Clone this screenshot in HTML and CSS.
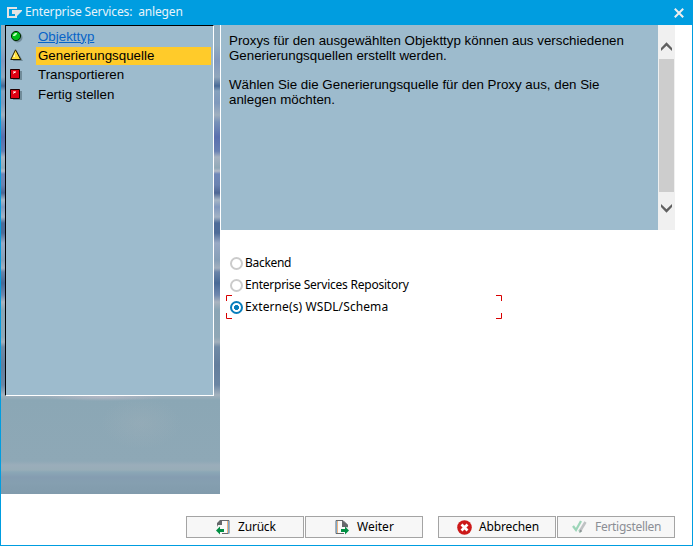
FILE: index.html
```html
<!DOCTYPE html>
<html lang="de">
<head>
<meta charset="utf-8">
<title>Enterprise Services: anlegen</title>
<link rel="stylesheet" href="styles.css">
</head>
<body>
<div class="window">
  <header class="titlebar">
    <svg class="app-icon" width="15" height="12" viewBox="0 0 15 12"><path d="M10 1H1v9h9" fill="none" stroke="#e4e4e4" stroke-width="2"/><path d="M3 2h11v1H6v4H3z" fill="#009de0"/><path d="M5 3h10v1l-5 5H8V7H5z" fill="#e4e4e4"/></svg>
    <h1 class="title">Enterprise Services:&nbsp; anlegen</h1>
    <svg class="close" width="10" height="10" viewBox="0 0 10 10"><path d="M.8.8l8.4 8.4M9.2.8L.8 9.2" stroke="#eee" stroke-width="2"/></svg>
  </header>
  <main class="content">
    <aside class="sidebar">
      <ul class="steps">
        <li class="step"><svg width="14" height="14" viewBox="0 0 14 14"><circle cx="7.500" cy="7.500" r="5" fill="#708b99"/><circle cx="6" cy="6" r="4.600" fill="#00bd18" stroke="#002800"/><path d="M3 5l2-2h2v1L5 6H3z" fill="#b8ffb8"/></svg><a class="label link">Objekttyp</a></li>
        <li class="step active"><svg width="14" height="14" viewBox="0 0 14 14"><path d="M7 2l6 10H3z" fill="#708b99"/><path d="M5.500 .8L.8 10.500h9.900z" fill="#ffe13c" stroke="#241c00"/><path d="M5 4L3 8h2z" fill="#fff6bc"/></svg><span class="label">Generierungsquelle</span></li>
        <li class="step"><svg width="14" height="14" viewBox="0 0 14 14"><path d="M3 3h9v9H3z" fill="#708b99"/><path d="M.5 1.500h9v9h-9z" fill="#e00012" stroke="#200000"/><path d="M3 3h3v2H4v1H3z" fill="#ff8585"/><path d="M4 4h1v1H4z" fill="#fff"/></svg><span class="label">Transportieren</span></li>
        <li class="step"><svg width="14" height="14" viewBox="0 0 14 14"><path d="M3 3h9v9H3z" fill="#708b99"/><path d="M.5 1.500h9v9h-9z" fill="#e00012" stroke="#200000"/><path d="M3 3h3v2H4v1H3z" fill="#ff8585"/><path d="M4 4h1v1H4z" fill="#fff"/></svg><span class="label">Fertig stellen</span></li>
      </ul>
    </aside>
    <section class="pane">
      <div class="info">
        <div class="info-text">
          <p>Proxys für den ausgewählten Objekttyp können aus verschiedenen<br>Generierungsquellen erstellt werden.</p>
          <p>Wählen Sie die Generierungsquelle für den Proxy aus, den Sie<br>anlegen möchten.</p>
        </div>
        <div class="scrollbar">
          <svg width="11" height="9" viewBox="0 0 11 9"><path d="M0 6L5.500 .3 11 6v3L5.500 3.700 0 9z" fill="#606060"/></svg>
          <div class="thumb"></div>
          <svg width="11" height="9" viewBox="0 0 11 9"><path d="M0 3l5.500 5.700L11 3V0L5.500 5.300 0 0z" fill="#606060"/></svg>
        </div>
      </div>
      <div class="options">
        <div class="option"><i class="radio"></i><span class="t-backend">Backend</span></div>
        <div class="option"><i class="radio"></i><span class="t-repo">Enterprise Services Repository</span></div>
        <div class="option"><i class="radio checked"></i><span class="t-wsdl">Externe(s) WSDL/Schema</span>
          <svg class="focus" width="276" height="24" viewBox="0 0 276 24"><path d="M.5 6V.5H6M270 .5h5.500V6M.5 18v5.500H6M270 23.500h5.500V18" fill="none" stroke="#d80000"/></svg>
        </div>
      </div>
    </section>
  </main>
  <footer class="buttons">
    <div class="button back"><svg width="14" height="16" viewBox="0 0 14 16"><path d="M4 1.500h9v13H6" fill="#fafafa" stroke="#65686b"/><path d="M11.500 2v12" stroke="#efb47e"/><path d="M12.500 2v13" stroke="#78a6cc"/><path d="M1 6V4l3-3h2v5H2v2z" fill="#65686b"/><path d="M0 11.500L4 7.500V10h4v3H4v2.500z" fill="#008f43"/></svg><span>Zurück</span></div>
    <div class="button next"><svg width="14" height="16" viewBox="0 0 14 16"><path d="M9 14.500H1v-13h7l4 4v3" fill="#fafafa" stroke="#65686b"/><path d="M1.500 2v12" stroke="#78a6cc"/><path d="M2.500 2v12" stroke="#efb47e"/><path d="M7 1l6 5v2H7z" fill="#65686b"/><path d="M14 11.500L10 7.500V10H6v3h4v2.500z" fill="#008f43"/></svg><span>Weiter</span></div>
    <div class="button cancel"><svg width="15" height="15" viewBox="0 0 15 15"><circle cx="7.500" cy="7.500" r="7.300" fill="#cc1919"/><path d="M4.500 4.500l6 6M10.500 4.500l-6 6" stroke="#fff" stroke-width="2.700"/></svg><span>Abbrechen</span></div>
    <div class="button finish"><svg width="15" height="14" viewBox="0 0 15 14"><path d="M1 6l3 4 5-9M7 10l2 2" fill="none" stroke="#9cd5b8" stroke-width="2.300"/><path d="M13.500 2L8 11" stroke="#bfc2c4" stroke-width="2.600"/><path d="M8.300 9.500l-1 3.500 3-2z" fill="#8f9496"/></svg><span>Fertigstellen</span></div>
  </footer>
</div>
</body>
</html>
```

FILE: styles.css
```css
* { box-sizing: border-box; }
body { margin: 0; background: #fff; color: #000; font: 12px/16px "Noto Sans", sans-serif; }
svg { display: block; flex: none; }
.window { width: 693px; height: 546px; display: flex; flex-direction: column; border: 1px solid #009de0; border-top: 0; }
.titlebar { flex: none; height: 25px; display: flex; align-items: center; padding: 0 8px 0 6px; background: #009de0; color: #e8f4fa; }
.title { margin: -1px 0 0 3px; font-size: 12px; font-weight: 400; letter-spacing: -.15px; }
.close { margin: 1px 0 0 auto; }
.content { display: flex; height: 469px; }
.sidebar {
  width: 219px; padding-left: 4px;
  background:
    radial-gradient(ellipse 60px 4px at 102px 372px, rgba(190,187,200,.7), transparent),
    radial-gradient(ellipse 40px 26px at 140px 398px, rgba(170,181,188,.25), transparent),
    linear-gradient(#93aec0 0, #93aec0 20px, #8298bd 36px, #91a7bc 52px, #486a96 61px, #86a2bd 66px, #7f99bc 78px, #a0b0bf 90px, #7892b8 97px, #596fae 112px, #6880b2 126px, #a8b4c2 132px, #91a9b8 143px, #b4bbc8 146px, #7088b8 149px, #6b83b0 160px, #4e6794 168px, #a7b7c6 175px, #8199be 182px, #a3b3c5 192px, #4e6c98 198px, #4e6c98 208px, #99aac5 218px, #879fb7 235px, #a3b0bf 243px, #6a84a8 247px, #486a96 258px, #6f88ae 270px, #aab4bf 277px, #8aa5b5 285px, #8fa7b6 312px, #a3b0bc 317px, #708aa5 322px, #647e9c 340px, #6c86a3 360px, #a3b2be 370px, #8ba7b5 375px, #8ea8b6 436px, #9aadba 440px, #98adb8 445px, #8ba7b6 447px, #859db1 452px, #859fb0 458px, #819bac 469px);
}
.steps { width: 209px; height: 371px; margin: 0; padding: 1px 2px 0 4px; list-style: none; background: #9dbbcd; border: solid; border-width: 1px; border-color: #000 #fff #fff #000; font: 13.333px/18px "Liberation Sans", sans-serif; }
.step { display: flex; align-items: center; height: 19.400px; }
.step .label { width: 175px; height: 18px; margin-left: 13px; padding-left: 2px; white-space: nowrap; }
.step .link { width: auto; margin-left: 15px; padding-left: 0; }
.active .label { background: #ffcb2a; }
.step svg { margin-right: -1px; }
.link { color: #0764c8; text-decoration: underline; }
.pane { flex: 1; }
.info { width: 455px; height: 205px; display: flex; background: #9dbbcd; border-left: 1px solid #fff; }
.info-text { width: 437px; padding: 8px 0 0 8px; font: 13.333px/15px "Liberation Sans", sans-serif; white-space: nowrap; }
.info-text p { margin: 0 0 14px; }
.scrollbar { width: 17px; display: flex; flex-direction: column; align-items: center; padding: 17px 0; background: #f0f0f0; }
.thumb { width: 15px; height: 133px; margin: 8px 0 12px; background: #cdcdcd; }
.options { padding: 22px 0 0 10px; }
.option { position: relative; display: flex; align-items: center; height: 22px; white-space: nowrap; }
.radio { width: 13px; height: 13px; border: 2px solid #cbcbcb; border-radius: 50%; margin-right: 2px; }
.checked { border-color: #087dbc; background: radial-gradient(circle, #087dbc 0 2.200px, #fff 2.800px); }
.t-backend { letter-spacing: -.3px; }
.t-repo { letter-spacing: -.23px; }
.t-wsdl { letter-spacing: .1px; }
.focus { position: absolute; left: -4px; top: -1px; }
.buttons { display: flex; margin: 22px 0 0 185px; gap: 1px; }
.button { width: 118px; height: 22px; display: flex; align-items: center; background: #f7f7f7; border: 1px solid #a4a4a4; white-space: nowrap; font-size: 12px; }
.back, .next { padding-left: 29px; }
.back span, .next span { margin-left: 8px; }
.back span { letter-spacing: -.2px; }
.cancel { margin-left: 14px; padding-left: 18px; }
.cancel span { margin-left: 7px; letter-spacing: -.15px; }
.finish { padding-left: 14px; color: #8b8e95; }
.finish span { margin-left: 8px; letter-spacing: -.3px; }
```
